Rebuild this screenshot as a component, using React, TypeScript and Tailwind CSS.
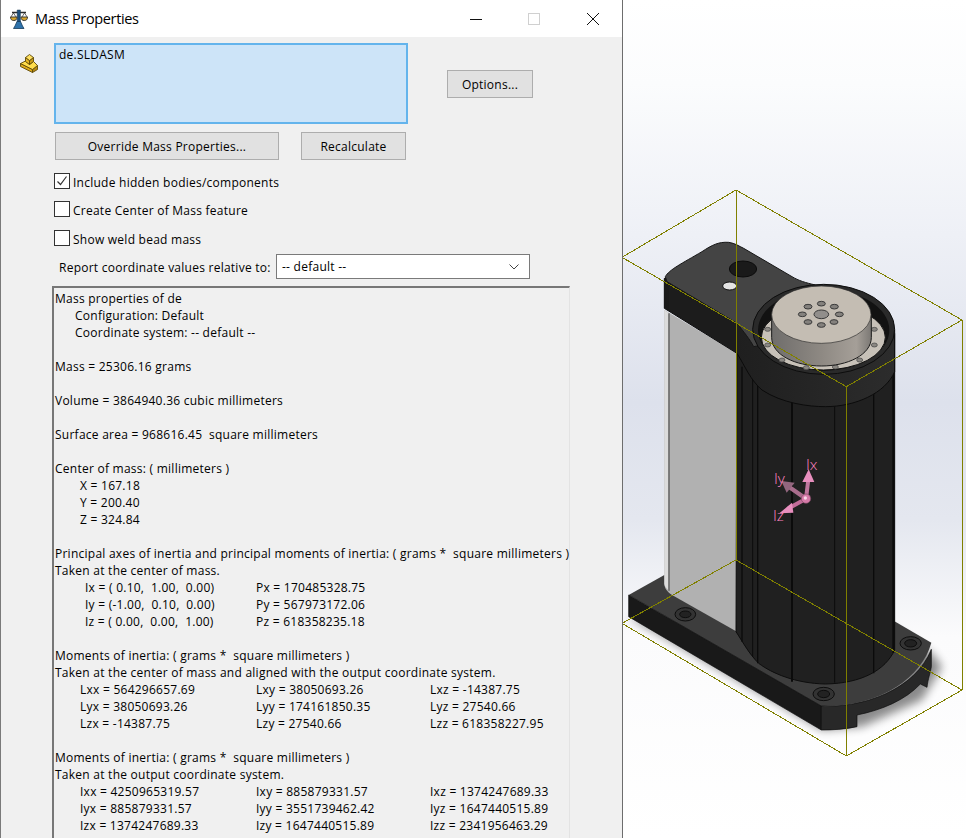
const SEGOE = "font-['Open_Sans',sans-serif] tracking-[0.25px]";

type Row =
  | { kind: 'text'; text?: string; indent?: number }
  | { kind: 'cols'; cols: string[]; widths: number[]; indent: number };

const p = (cols: string[]): Row => ({ kind: 'cols', cols, widths: [171, 200], indent: 30 });
const m = (cols: string[]): Row => ({ kind: 'cols', cols, widths: [176, 174, 140], indent: 25 });
const t = (text?: string, indent = 0): Row => ({ kind: 'text', text, indent });

const ROWS: Row[] = [
  t('Mass properties of de'),
  t('Configuration: Default', 20),
  t('Coordinate system: -- default --', 20),
  t(),
  t('Mass = 25306.16 grams'),
  t(),
  t('Volume = 3864940.36 cubic millimeters'),
  t(),
  t('Surface area = 968616.45  square millimeters'),
  t(),
  t('Center of mass: ( millimeters )'),
  t('X = 167.18', 25),
  t('Y = 200.40', 25),
  t('Z = 324.84', 25),
  t(),
  t('Principal axes of inertia and principal moments of inertia: ( grams *  square millimeters )'),
  t('Taken at the center of mass.'),
  p(['Ix = ( 0.10,  1.00,  0.00)', 'Px = 170485328.75']),
  p(['Iy = (-1.00,  0.10,  0.00)', 'Py = 567973172.06']),
  p(['Iz = ( 0.00,  0.00,  1.00)', 'Pz = 618358235.18']),
  t(),
  t('Moments of inertia: ( grams *  square millimeters )'),
  t('Taken at the center of mass and aligned with the output coordinate system.'),
  m(['Lxx = 564296657.69', 'Lxy = 38050693.26', 'Lxz = -14387.75']),
  m(['Lyx = 38050693.26', 'Lyy = 174161850.35', 'Lyz = 27540.66']),
  m(['Lzx = -14387.75', 'Lzy = 27540.66', 'Lzz = 618358227.95']),
  t(),
  t('Moments of inertia: ( grams *  square millimeters )'),
  t('Taken at the output coordinate system.'),
  m(['Ixx = 4250965319.57', 'Ixy = 885879331.57', 'Ixz = 1374247689.33']),
  m(['Iyx = 885879331.57', 'Iyy = 3551739462.42', 'Iyz = 1647440515.89']),
  m(['Izx = 1374247689.33', 'Izy = 1647440515.89', 'Izz = 2341956463.29']),
];

const ScalesIcon = () => (
  <svg width="18" height="20" viewBox="0 0 18 20" className="shrink-0">
    <path d="M2 3.500h14" stroke="#2b2b2b" strokeWidth="1.500" />
    <path d="M7.200 1h3.200v12h-3.200z" fill="#1e4f7c" stroke="#12344f" strokeWidth="0.500" />
    <path d="M3.500 19.500h10.500l-1.500-2.500-2-4.500h-3.500l-2 4.500z" fill="#2e72ab" stroke="#143a5a" strokeWidth="0.800" />
    <path d="M3.500 4L0.800 8M3.500 4L6 8M14.500 4L12 8M14.500 4L17.200 8" stroke="#444" strokeWidth="0.800" />
    <path d="M0.500 8h6.500c0 2.500-1.200 3.500-3.200 3.500S0.500 10.500 0.500 8z" fill="#d7a428" stroke="#3d3a33" strokeWidth="1" />
    <path d="M11 8h6.500c0 2.500-1.200 3.500-3.200 3.500S11 10.500 11 8z" fill="#d7a428" stroke="#3d3a33" strokeWidth="1" />
  </svg>
);

const PartIcon = () => (
  <svg width="18" height="19" viewBox="-0.500 -0.500 18 19">
    <g stroke="#5f4a08" strokeWidth="0.900" strokeLinejoin="round">
      <path d="M0 9l12 6v3L0 12z" fill="#dca81a" />
      <path d="M12 15l5-4v4l-5 3z" fill="#b98a10" />
      <path d="M0 9l5-2.500L9 10l4-3 4 4-5 4z" fill="#ffdc4a" />
      <path d="M5 3l4 3v4L5 7z" fill="#e8b823" />
      <path d="M9 6l4-3v4l-4 3z" fill="#c99a14" />
      <path d="M5 3l4-3 4 3-4 3z" fill="#ffe060" />
    </g>
  </svg>
);

const Btn = ({ label, className }: { label: string; className: string }) => (
  <button className={`h-[28px] border border-[#adadad] bg-[#e1e1e1] pt-px text-[12px] text-black ${className}`}>{label}</button>
);

const Check = ({ label, checked, mt }: { label: string; checked?: boolean; mt: string }) => (
  <div className={`flex h-[16px] items-center gap-[3px] text-[12px] ${mt}`}>
    <span className="flex h-[16px] w-[16px] items-center justify-center border border-[#333333] bg-white">
      {checked && (
        <svg width="12" height="12" viewBox="0 0 12 12">
          <path d="M1.500 6.500l3 3 6-8" fill="none" stroke="#333" strokeWidth="1.200" />
        </svg>
      )}
    </span>
    <span className="pt-[3px]">{label}</span>
  </div>
);

const Results = () => (
  <div className="mt-[7px] ml-[-2px] h-[560px] w-[518px] border-t-2 border-r border-l-2 border-t-[#777777] border-r-[#e3e3e3] border-l-[#777777] pt-[2px] pl-px text-[12px] leading-[17px] whitespace-pre">
    {ROWS.map((row, i) =>
      row.kind === 'text' ? (
        <div key={i} className="h-[17px]" style={{ paddingLeft: row.indent }}>
          {row.text}
        </div>
      ) : (
        <div key={i} className="flex h-[17px]" style={{ paddingLeft: row.indent }}>
          {row.cols.map((c, j) => (
            <span key={j} className="shrink-0" style={{ width: row.widths[j] }}>
              {c}
            </span>
          ))}
        </div>
      ),
    )}
  </div>
);

const Dialog = () => (
  <div className={`h-[838px] w-[623px] shrink-0 overflow-hidden border-r border-l border-r-[#6d6d6d] border-l-[#7a7a7a] bg-[#f0f0f0] text-black ${SEGOE}`}>
    <div className="flex h-[37px] items-center bg-white pl-[9px]">
      <ScalesIcon />
      <span className="ml-[7px] text-[14.500px] tracking-[-0.35px]">Mass Properties</span>
      <div className="ml-auto flex items-center">
        <svg width="14" height="14" viewBox="0 0 14 14" className="mr-[44px]"><path d="M1 7.500h12" stroke="#111" /></svg>
        <svg width="14" height="14" viewBox="0 0 14 14" className="mr-[45px]"><rect x="1.500" y="1.500" width="11" height="11" fill="none" stroke="#d0d0d0" /></svg>
        <svg width="14" height="14" viewBox="0 0 14 14" className="mr-[22px]"><path d="M1 1l12 12M13 1L1 13" stroke="#111" /></svg>
      </div>
    </div>
    <div className="flex pt-[6px] pl-[19px]">
      <div className="w-[34px] pt-[11px]"><PartIcon /></div>
      <div className="w-[354px]">
        <div className="h-[81px] w-[354px] border-2 border-[#64b4ec] bg-[#cde4f8] pt-px pl-[3px] text-[12px] leading-[17px]">de.SLDASM</div>
        <div className="mt-[8px] flex gap-[22px] pl-px">
          <Btn label="Override Mass Properties..." className="w-[224px]" />
          <Btn label="Recalculate" className="w-[105px]" />
        </div>
        <Check label="Include hidden bodies/components" checked mt="mt-[13px]" />
        <Check label="Create Center of Mass feature" mt="mt-[12px]" />
        <Check label="Show weld bead mass" mt="mt-[13px]" />
        <div className="mt-[8px] flex w-[480px] items-center pl-[5px] text-[12px]">
          <span className="w-[217px] pt-[2px]">Report coordinate values relative to:</span>
          <div className="flex h-[25px] w-[254px] shrink-0 items-center justify-between border border-[#7a7a7a] bg-white pr-[9px] pl-[5px]">
            <span>-- default --</span>
            <svg width="12" height="8" viewBox="0 0 12 8"><path d="M1.500 1.500L6 6l4.500-4.500" fill="none" stroke="#444" /></svg>
          </div>
        </div>
        <Results />
      </div>
      <div className="pt-[27px] pl-[39px]">
        <Btn label="Options..." className="w-[86px]" />
      </div>
    </div>
  </div>
);

// 3x coordinates: x = local px * 3, y = page px * 3
const Scene = () => (
  <div className="h-[838px] flex-1 bg-[linear-gradient(180deg,#ffffff_0%,#fbfcfd_10%,#eef0f6_28%,#dde1ec_48%,#e4e7ef_62%,#fbfbfc_76%,#ffffff_100%)]">
    <svg width="343" height="838" viewBox="3 0 1029 2514" className="block">
      <defs>
        <filter id="soft" x="-20%" y="-20%" width="140%" height="140%"><feGaussianBlur stdDeviation="14" /></filter>
        <linearGradient id="cyl" x1="0" x2="1" y1="0" y2="0">
          <stop offset="0" stopColor="#6f6d6b" />
          <stop offset="0.5" stopColor="#8e8983" />
          <stop offset="0.85" stopColor="#a59f98" />
          <stop offset="1" stopColor="#7b7874" />
        </linearGradient>
        <linearGradient id="band" x1="0" x2="1" y1="0" y2="0">
          <stop offset="0" stopColor="#191919" />
          <stop offset="1" stopColor="#2c2c2c" />
        </linearGradient>
      </defs>

      {/* base plate */}
      <path d="M20 1850L600 2190L720 2180L900 2100L960 2000L930 1960L800 1880Z" fill="#000" opacity="0.45" filter="url(#soft)" />
      <path d="M20 1785L127 1725L820 1865L928 1928C900 2030 780 2120 598 2118Z" fill="#3d3d3d" />
      <path d="M20 1785L598 2118V2190L20 1850Z" fill="#191919" stroke="#0c0c0c" strokeWidth="2" />
      <path d="M598 2118C720 2125 880 2070 928 1948V2000C925 2020 918 2035 915 2062L895 2052C850 2100 780 2130 705 2145V2180C670 2188 630 2190 598 2190Z" fill="#282828" stroke="#0c0c0c" strokeWidth="2" />
      <g fill="#333" stroke="#0d0d0d" strokeWidth="3">
        <ellipse cx="190" cy="1843" rx="31" ry="20" />
        <ellipse cx="190" cy="1843" rx="17" ry="10" fill="#222" />
        <ellipse cx="605" cy="2082" rx="32" ry="20" />
        <ellipse cx="605" cy="2082" rx="18" ry="11" fill="#222" />
        <ellipse cx="866" cy="1930" rx="32" ry="20" />
        <ellipse cx="866" cy="1930" rx="18" ry="11" fill="#222" />
      </g>

      {/* silver face */}
      <path d="M127 930L345 1060V1895L150 1785C135 1775 127 1765 127 1750Z" fill="#b1b1b1" />
      <path d="M127 930L141 940V1772C132 1765 127 1758 127 1750Z" fill="#dcdcdc" />
      <path d="M141 940V1772" stroke="#6b6b6b" strokeWidth="5" />

      {/* column */}
      <path d="M345 1000H818V1950C790 2010 720 2050 610 2052C520 2050 450 2020 410 1990C380 1960 365 1930 342 1895Z" fill="#202020" stroke="#0d0d0d" strokeWidth="3" />
      <g stroke="#0b0b0b" fill="none">
        <path d="M360 1100V1925" strokeWidth="4" />
        <path d="M392 1100V1970" strokeWidth="3" />
        <path d="M407 1100V1990" strokeWidth="4" />
        <path d="M510 1200V2045" strokeWidth="6" />
        <path d="M638 1210V2048" strokeWidth="3" />
        <path d="M755 1180V2020" strokeWidth="4" />
        <path d="M814 1100V1958" strokeWidth="6" />
      </g>

      {/* bracket */}
      <path d="M127 835V925L345 1060C370 1100 385 1140 420 1170C480 1210 560 1220 610 1220C700 1220 790 1180 818 1115V990L600 900Z" fill="url(#band)" stroke="#0b0b0b" strokeWidth="3" />
      <path d="M140 850L345 975L345 1060L140 930Z" fill="#1c1c1c" />
      <path d="M130 830C140 810 180 790 240 755C270 735 290 725 320 727C340 730 350 738 365 745L510 830C530 842 550 848 580 855L600 1000L395 1040C385 1020 365 995 345 970L135 845Z" fill="#444444" stroke="#161616" strokeWidth="3" />
      <ellipse cx="605" cy="988" rx="213" ry="135" fill="#2a2a2a" stroke="#0d0d0d" strokeWidth="3" />
      <ellipse cx="605" cy="990" rx="197" ry="122" fill="#121212" />
      <ellipse cx="604" cy="1012" rx="186" ry="98" fill="#c7c1b8" stroke="#111" strokeWidth="3" />
      <g fill="#8a8782" stroke="#3f3f3f" strokeWidth="2">
        <ellipse cx="437" cy="988" rx="9" ry="6" />
        <ellipse cx="437" cy="1035" rx="9" ry="6" />
        <ellipse cx="480" cy="1080" rx="9" ry="6" />
        <ellipse cx="553" cy="1103" rx="9" ry="6" />
        <ellipse cx="640" cy="1101" rx="9" ry="6" />
        <ellipse cx="713" cy="1080" rx="9" ry="6" />
        <ellipse cx="757" cy="1035" rx="9" ry="6" />
        <ellipse cx="757" cy="988" rx="9" ry="6" />
      </g>
      <ellipse cx="363" cy="807" rx="41" ry="24" fill="#1a1a1a" stroke="#0c0c0c" strokeWidth="3" />
      <ellipse cx="323" cy="858" rx="21" ry="12" fill="#e4e4e4" stroke="#111" strokeWidth="3" />

      {/* top cylinder */}
      <path d="M449 942V1012C449 1065 520 1098 598 1098S748 1065 748 1012V942Z" fill="url(#cyl)" stroke="#1a1a1a" strokeWidth="3" />
      <ellipse cx="598" cy="944" rx="149" ry="86" fill="#c4bdb3" stroke="#2a2a2a" strokeWidth="2" />
      <g fill="#84817d" stroke="#3a3a3a" strokeWidth="3">
        <ellipse cx="598" cy="911" rx="12" ry="7" />
        <ellipse cx="637" cy="920" rx="12" ry="7" />
        <ellipse cx="652" cy="943" rx="12" ry="7" />
        <ellipse cx="636" cy="966" rx="12" ry="7" />
        <ellipse cx="598" cy="975" rx="12" ry="7" />
        <ellipse cx="558" cy="966" rx="12" ry="7" />
        <ellipse cx="541" cy="943" rx="12" ry="7" />
        <ellipse cx="558" cy="920" rx="12" ry="7" />
        <ellipse cx="598" cy="943" rx="22" ry="13" fill="#918e8b" />
      </g>

      {/* bounding box */}
      <g fill="none" stroke="#808000" strokeWidth="3" shapeRendering="crispEdges">
        <path d="M342 570L0 772L673 1160L1020 960Z" />
        <path d="M0 1870L342 1680L1020 2070L673 2268Z" />
        <path d="M342 570V1680M673 1160V2268M1020 960V2070" />
      </g>

      {/* principal axes */}
      <g fill="none" strokeLinecap="round">
        <path d="M552 1496L560 1430" stroke="#c0769e" strokeWidth="12" />
        <path d="M552 1496L494 1456" stroke="#a86d8c" strokeWidth="13" />
        <path d="M552 1496L500 1525" stroke="#c26c99" strokeWidth="12" />
      </g>
      <path d="M560 1408L541 1446H577Z" fill="#e88fbe" />
      <path d="M478 1443L518 1448L494 1478Z" fill="#92667e" />
      <path d="M472 1540L510 1508L514 1538Z" fill="#e88fbe" />
      <circle cx="552" cy="1496" r="14" fill="#d67ba9" stroke="#7a4560" strokeWidth="2" />
      <circle cx="550" cy="1494" r="5" fill="#fbd6e8" />
      <g fill="#ff85c2" fontSize="46" fontWeight="300" className="font-['Open_Sans',sans-serif]">
        <text x="552" y="1411">Ix</text>
        <text x="456" y="1452">Iy</text>
        <text x="453" y="1562">Iz</text>
      </g>
    </svg>
  </div>
);

export default function App() {
  return (
    <div className="flex h-[838px] w-[966px] overflow-hidden bg-white">
      <Dialog />
      <Scene />
    </div>
  );
}
